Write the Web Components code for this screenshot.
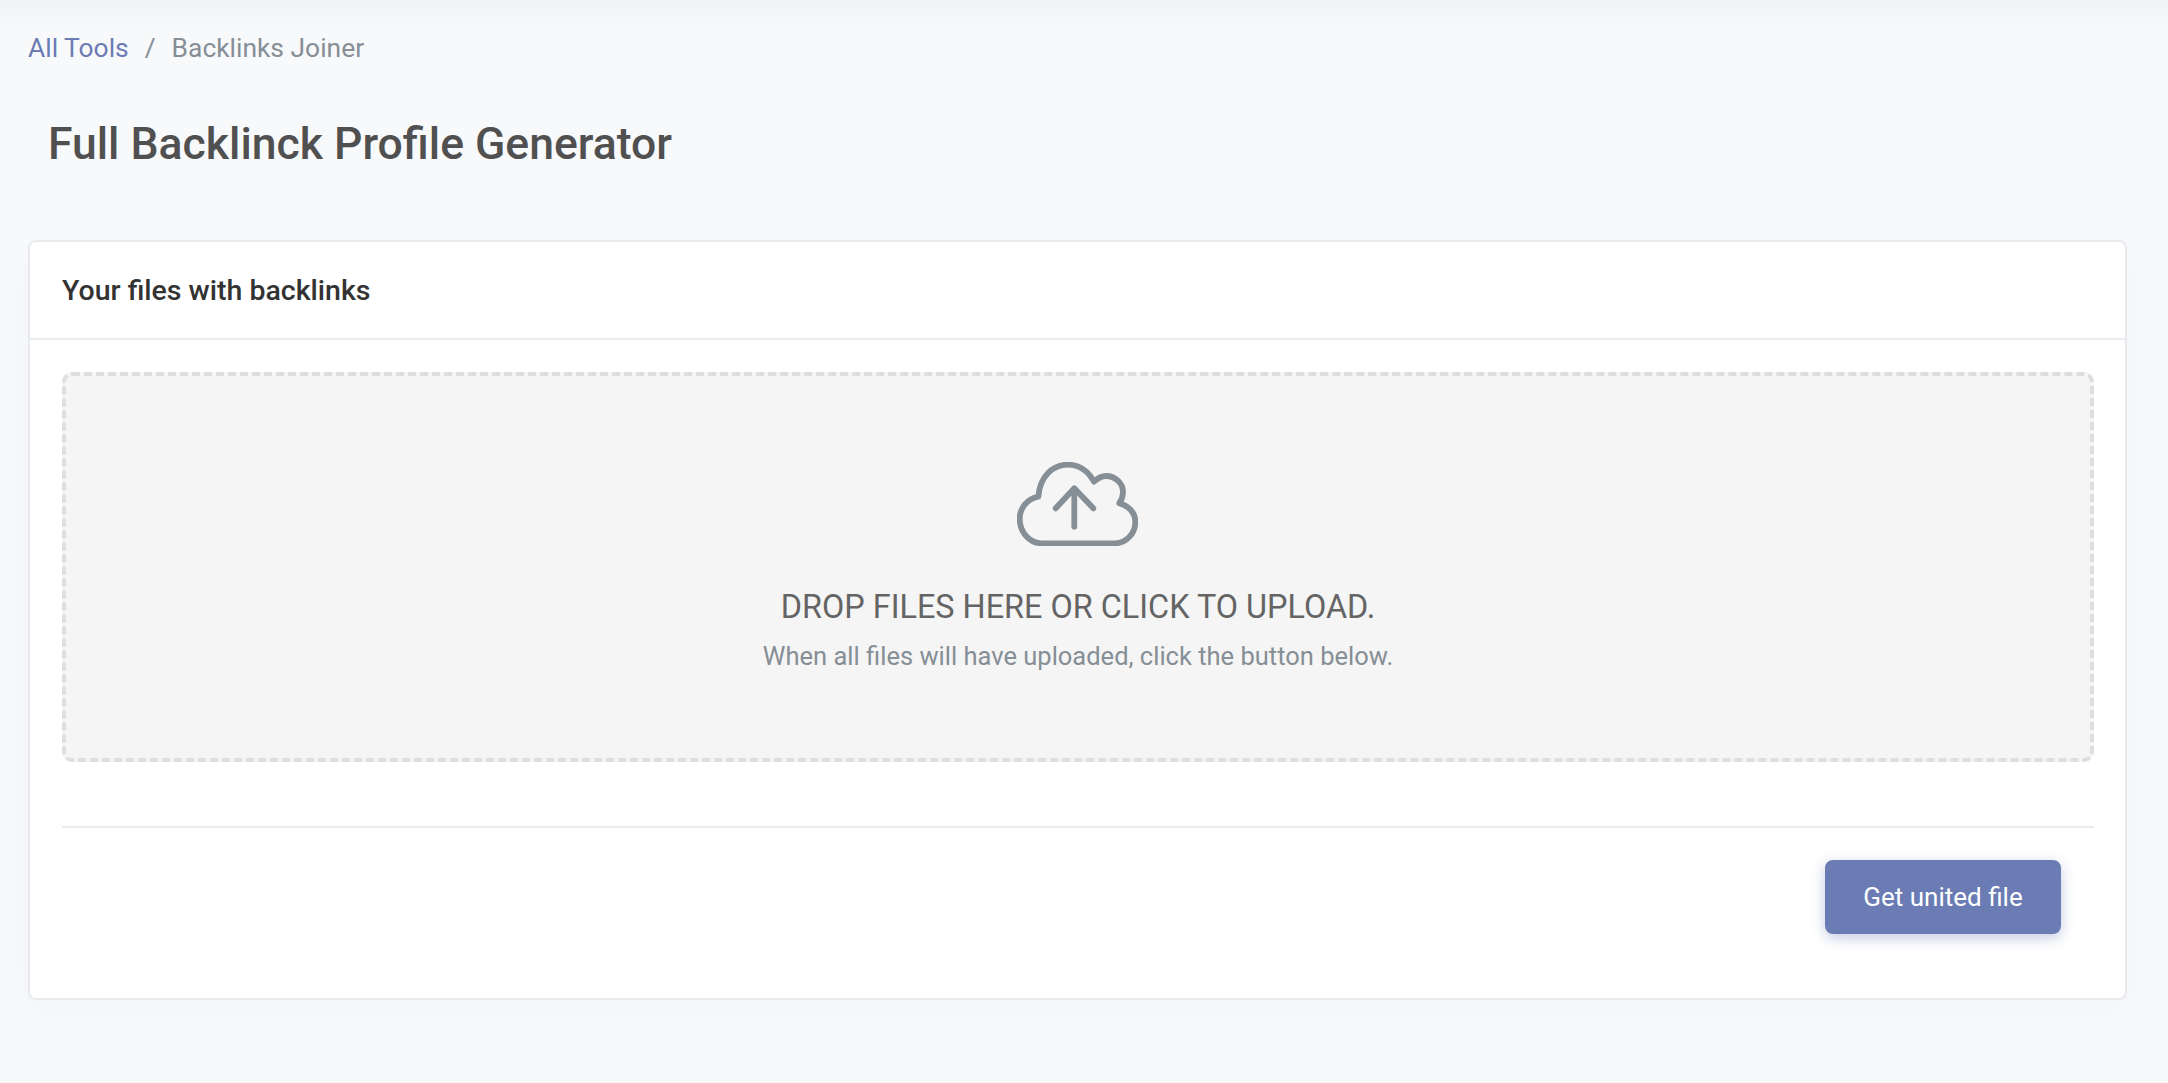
<!DOCTYPE html>
<html lang="en"><head><meta charset="utf-8"><title>Backlinks Joiner</title>
<style>
html,body{margin:0;height:100%;}
body{background:#f8f9fb;font-family:Roboto,"Liberation Sans",sans-serif;overflow:hidden;}
</style></head><body>
<tool-page>
<bread-crumbs slot="crumbs"></bread-crumbs>
<h-title slot="title">Full Backlinck Profile Generator</h-title>
<upload-card slot="card" heading="Your files with backlinks"></upload-card>
</tool-page>
<template id="t-page"><style>
:host{display:block;height:1083px;box-sizing:border-box;padding:0 41px 0 28px;background:linear-gradient(#f2f3f6 0,#f8f9fb 30px);}
</style><slot name="crumbs"></slot><slot name="title"></slot><slot name="card"></slot></template>
<template id="t-bc"><style>
:host{display:flex;align-items:center;height:32px;padding-top:32px;font-size:26.4px;color:#868e96;line-height:32px;}
a{color:#6b7cb4;text-decoration:none;}
i{font-style:normal;margin:0 16px;}
</style><a href="#">All Tools</a><i>/</i><span>Backlinks Joiner</span></template>
<template id="t-title"><style>
:host{display:block;margin:50px 0 0 20px;height:60px;font-size:44.5px;line-height:60px;font-weight:500;color:#505050;}
</style><slot></slot></template>
<template id="t-card"><style>
:host{display:block;box-sizing:border-box;margin-top:66px;height:760px;background:#fff;border:2px solid #e9eaed;border-radius:8px;box-shadow:0 10px 40px rgba(40,50,90,.025);}
header{height:98px;box-sizing:border-box;padding-left:32px;display:flex;align-items:center;font-size:28.5px;font-weight:500;color:#333;border-bottom:2px solid #e9ecef;}
.body{padding:32px 31px 0 32px;}
.hr{height:2px;background:#e9ecef;margin-top:64px;}
.foot{display:flex;justify-content:flex-end;padding:32px 33px 0 0;}
</style><header id="h"></header><div class="body"><drop-zone></drop-zone><div class="hr"></div><div class="foot"><action-button>Get united file</action-button></div></div></template>
<template id="t-drop"><style>
:host{display:flex;flex-direction:column;align-items:center;box-sizing:border-box;height:390px;background:#f5f5f5;border:4px dashed #dedede;border-radius:10px;padding-top:86px;}
svg{display:block;width:121px;height:84px;margin-right:2px;}
.a{margin-top:40px;font-size:32.4px;line-height:42px;color:#646464;white-space:nowrap;}
.b{margin-top:12px;font-size:25.5px;line-height:32px;color:#868e96;white-space:nowrap;}
</style><svg viewBox="0 0 121 84" fill="none" stroke="#868e96" stroke-width="5.8" stroke-linecap="round" stroke-linejoin="round"><path d="M24.7 81.3H98C109 81.3 118.3 72 118.3 59.7C118.3 51 112 44 102.3 41.3C105 37.5 106 34 106 30C106 21 98 14 89 14C85 14 81 16 77 19.7C71 9 62 2.7 51 2.7C35 2.7 23 15 21.3 34.7C10 37 2.7 46 2.7 57C2.7 70.5 13 81.3 24.7 81.3Z"/><path d="M57.3 64.7V26.3M38.7 46.3L57.3 26.3L76.3 46.3"/></svg><div class="a">DROP FILES HERE OR CLICK TO UPLOAD.</div><div class="b">When all files will have uploaded, click the button below.</div></template>
<template id="t-btn"><style>
:host{display:block;}
button{width:236px;height:74px;border:0;border-radius:8px;background:#6b7cb4;color:#fff;font:400 26px Roboto,"Liberation Sans",sans-serif;box-shadow:0 4px 14px rgba(107,124,180,.4);padding:0;}
</style><button><slot></slot></button></template>
<script>
function def(tag,tpl){customElements.define(tag,class extends HTMLElement{constructor(){super();this.attachShadow({mode:'open'}).appendChild(document.getElementById(tpl).content.cloneNode(true));}});}
def('tool-page','t-page');def('bread-crumbs','t-bc');def('h-title','t-title');
def('drop-zone','t-drop');def('action-button','t-btn');
def('upload-card','t-card');
document.querySelectorAll('upload-card').forEach(c=>c.shadowRoot.getElementById('h').textContent=c.getAttribute('heading'));
</script>
</body></html>
